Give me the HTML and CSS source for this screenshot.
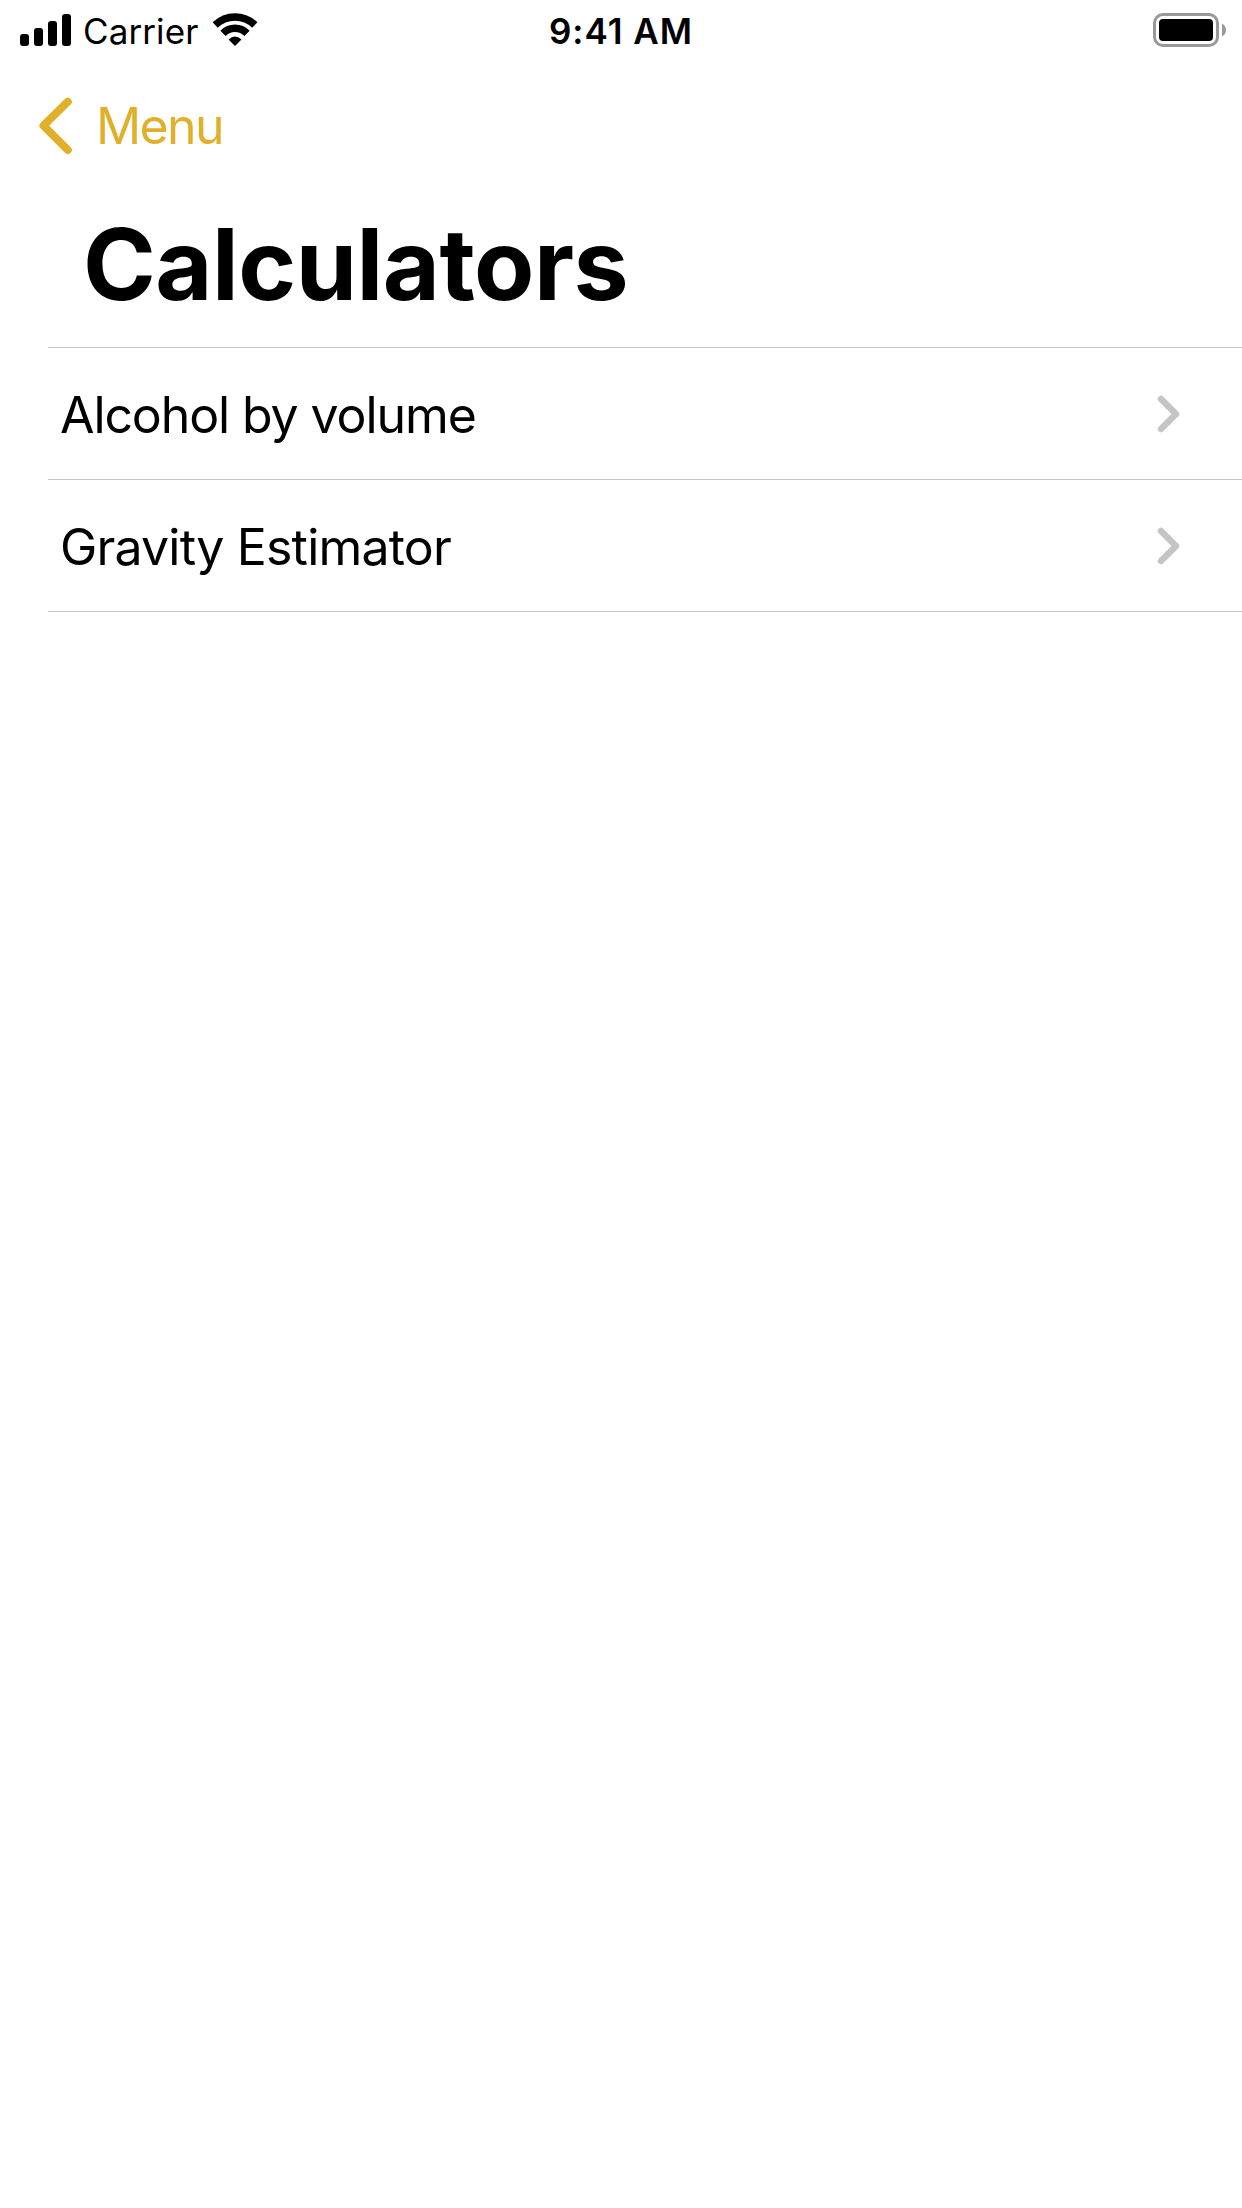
FILE: index.html
```html
<!DOCTYPE html>
<html lang="en">
<head>
<meta charset="utf-8">
<title>Calculators</title>
<link rel="stylesheet" href="styles.css">
</head>
<body>
<header class="status">
  <div class="status-left">
    <svg class="signal" width="52" height="32" viewBox="0 0 52 32"><rect x="0" y="20" width="9" height="12" rx="3"/><rect x="14" y="14" width="9" height="18" rx="3"/><rect x="28" y="7" width="9" height="25" rx="3"/><rect x="42" y="0" width="9" height="32" rx="3"/></svg>
    <span class="carrier">Carrier</span>
    <svg class="wifi" width="46" height="34" viewBox="0 0 46 34"><path d="M23 33l-6.500-6.500q6.500-6.200 13 0z"/><path class="arc" d="M3.200 12a28.300 28.300 0 0 1 39.600 0M11 20.300a17 17 0 0 1 24 0"/></svg>
  </div>
  <time class="clock">9:41 AM</time>
  <svg class="battery" width="74" height="34" viewBox="0 0 74 34"><rect class="shell" x="1.500" y="1.500" width="63" height="31" rx="8.500"/><rect x="6" y="6" width="54" height="22" rx="4"/><path class="cap" d="M69 10.500q4 2 4 6.500t-4 6.500z"/></svg>
</header>
<nav class="nav">
  <a class="back"><svg width="34" height="58" viewBox="0 0 34 58"><path d="M29.800 4.700L5.500 28.700l24.300 24.300"/></svg><span>Menu</span></a>
</nav>
<main>
  <h1 class="title">Calculators</h1>
  <ul class="list">
    <li class="row"><span class="label alcohol">Alcohol by volume</span><svg class="chevron" width="24" height="38" viewBox="0 0 24 38"><path d="M5 4l15 15L5 34"/></svg></li>
    <li class="row"><span class="label gravity">Gravity Estimator</span><svg class="chevron" width="24" height="38" viewBox="0 0 24 38"><path d="M5 4l15 15L5 34"/></svg></li>
  </ul>
</main>
</body>
</html>
```
FILE: styles.css
```css
* { box-sizing: border-box; }
body { margin: 0; background: #fff; color: #000; font-family: Inter, "Liberation Sans", sans-serif; }
.status { height: 60px; display: grid; grid-template-columns: 1fr auto 1fr; }
.status-left { display: flex; padding-left: 20px; }
.signal { margin-top: 14px; }
.carrier { margin-left: 11px; font-size: 35px; line-height: 62px; width: 118px; white-space: nowrap; letter-spacing: .1px; }
.wifi { margin: 13px 0 0 11px; }
.arc { fill: none; stroke: #000; stroke-width: 7.5; }
.clock { font-size: 35px; font-weight: 580; line-height: 62px; letter-spacing: 1px; }
.battery { justify-self: end; margin: 13px 15px 0 0; }
.shell { fill: none; stroke: #999; stroke-width: 3; }
.cap { fill: #999; }
.nav { height: 132px; padding-left: 38px; }
.back { display: flex; align-items: center; height: 132px; color: #e1b02b; font-size: 50px; letter-spacing: -1.6px; gap: 24px; }
.back path { fill: none; stroke: currentColor; stroke-width: 8; stroke-linecap: round; stroke-linejoin: round; }
.title { margin: 0; height: 155px; padding-left: 83px; font-size: 98.500px; line-height: 145px; font-weight: 700; letter-spacing: -.5px; }
.list { list-style: none; margin: 0 0 0 48px; padding: 0; border-top: 1px solid #c6c6c8; }
.row { height: 132px; display: flex; align-items: center; justify-content: space-between; padding: 0 62px 0 12px; font-size: 50px; border-bottom: 1px solid #c6c6c8; }
.label { padding-top: 2px; }
.alcohol { letter-spacing: -1.1px; }
.gravity { letter-spacing: -.8px; }
.chevron { margin-top: 1px; }
.chevron path { fill: none; stroke: #c5c5c7; stroke-width: 6.5; stroke-linecap: round; stroke-linejoin: round; }
```
